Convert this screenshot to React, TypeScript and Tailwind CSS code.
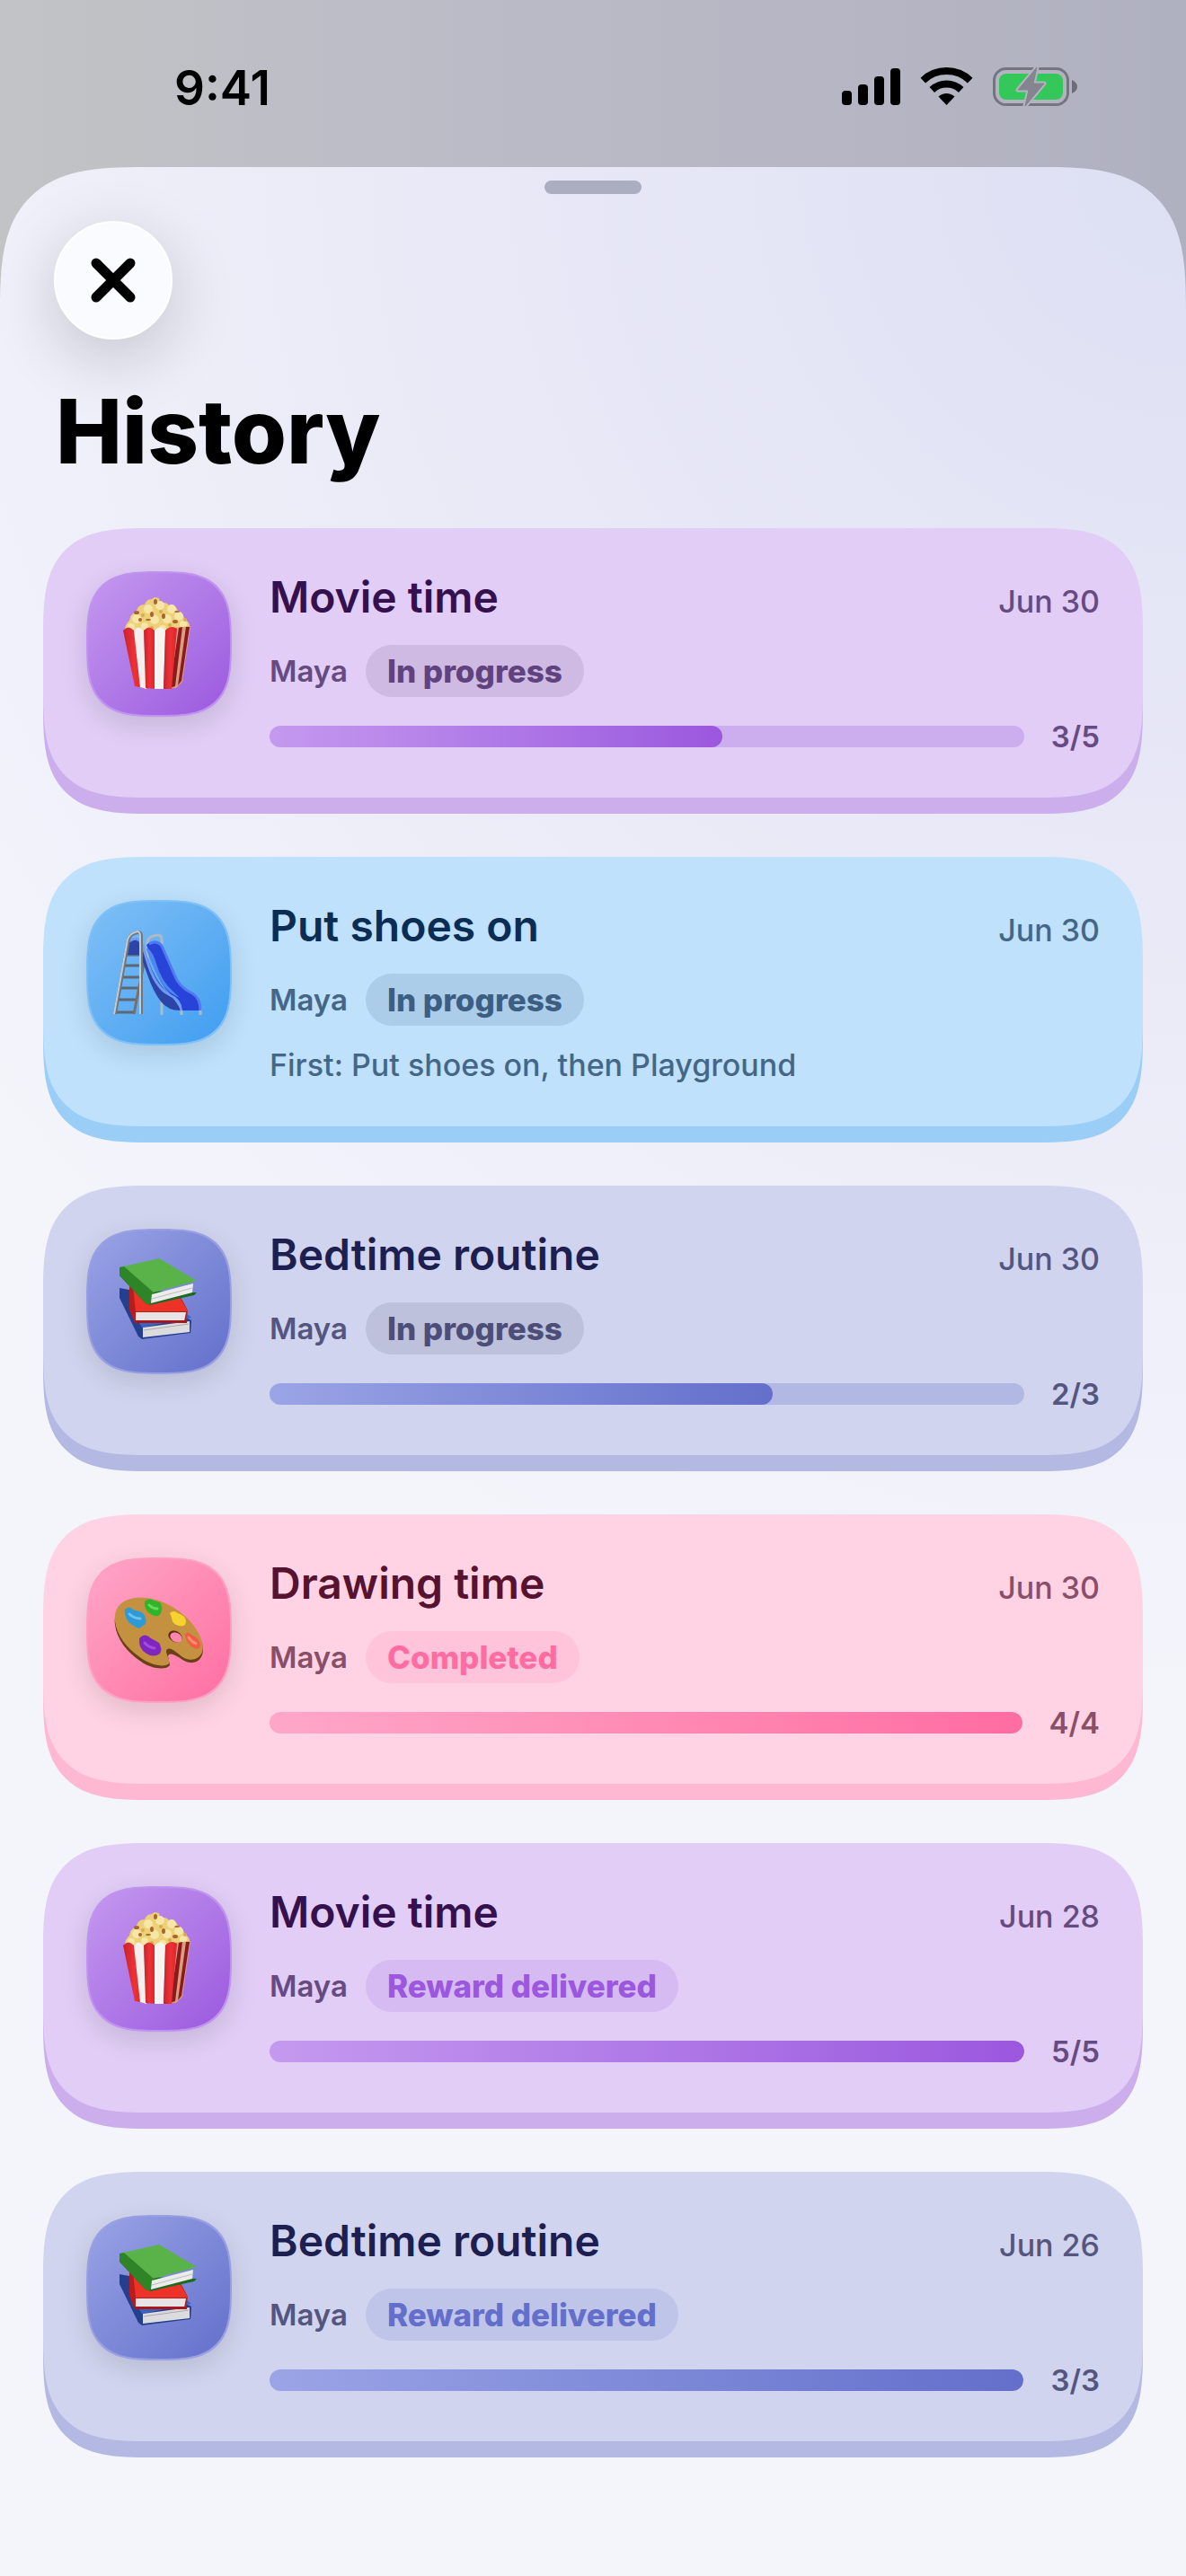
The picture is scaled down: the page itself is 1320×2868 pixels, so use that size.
import React from 'react';

type Theme = {
  face: string;
  edge: string;
  title: string;
  muted: string;
  track: string;
  fill: string;
  tile: string;
  doneBadge: string;
  openBadge: string;
};

const themes: Record<string, Theme> = {
  purple: {
    face: 'bg-[#e1cdf5] shadow-[0_18px_0_#cdaeed]',
    edge: 'border-[#c193f0]',
    title: 'text-[#34104f]',
    muted: 'text-[#664a82]',
    track: 'bg-[#ccadee]',
    fill: 'bg-linear-to-r from-[#c599ef] to-[#9b57de]',
    tile: 'bg-linear-to-br from-[#c599ef] to-[#9b57de]',
    doneBadge: 'bg-[#d5bbf1] text-[#9b57de]',
    openBadge: 'bg-[#cebae2] text-[#60437e]',
  },
  blue: {
    face: 'bg-[#bfe1fc] shadow-[0_18px_0_#9bcef7]',
    edge: 'border-[#7fc0f7]',
    title: 'text-[#0b2d54]',
    muted: 'text-[#456787]',
    track: 'bg-[#9bcef7]',
    fill: 'bg-linear-to-r from-[#80c0f6] to-[#3d9df0]',
    tile: 'bg-linear-to-br from-[#80c0f6] to-[#3d9df0]',
    doneBadge: 'bg-[#a5d3f9] text-[#3d9df0]',
    openBadge: 'bg-[#abcde9] text-[#3c5e82]',
  },
  indigo: {
    face: 'bg-[#d0d4ee] shadow-[0_18px_0_#b3b9e3]',
    edge: 'border-[#98a0e2]',
    title: 'text-[#1d1f50]',
    muted: 'text-[#54567f]',
    track: 'bg-[#b1b8e3]',
    fill: 'bg-linear-to-r from-[#9ba4e6] to-[#636fca]',
    tile: 'bg-linear-to-br from-[#9ba4e6] to-[#636fca]',
    doneBadge: 'bg-[#bfc5e9] text-[#636fca]',
    openBadge: 'bg-[#bdc1dc] text-[#4c4e78]',
  },
  pink: {
    face: 'bg-[#ffd3e3] shadow-[0_18px_0_#ffb8d1]',
    edge: 'border-[#ff9fc2]',
    title: 'text-[#56122e]',
    muted: 'text-[#894e68]',
    track: 'bg-[#ffb8d1]',
    fill: 'bg-linear-to-r from-[#ffa7c8] to-[#ff6ca1]',
    tile: 'bg-linear-to-br from-[#ffa7c8] to-[#ff6ca1]',
    doneBadge: 'bg-[#ffc4d9] text-[#ff6ca1]',
    openBadge: 'bg-[#eabfcf] text-[#7a405a]',
  },
};

function PopcornArt() {
  return (
    <svg viewBox="2 2 158 158" className="size-full" aria-hidden="true">
      <defs>
        <linearGradient id="pc-red" x1="0" x2="1">
          <stop offset="0" stopColor="#c3242c" />
          <stop offset="0.5" stopColor="#ee3136" />
          <stop offset="1" stopColor="#d9262d" />
        </linearGradient>
      </defs>
      <path d="M43 66 q0 -7 5 -11 q1 -8 8 -10 q1 -8 9 -8 q2 -6 8 -6 l3 -2 l5 1 l1 5 q7 -1 10 3 q8 -1 10 6 q7 4 7 9 q7 3 6 12 l-8 6 l-58 2z" fill="#ecd07a" />
      <g fill="#f7e6a6">
        <circle cx="56" cy="53" r="5" />
        <circle cx="69" cy="42" r="5" />
        <circle cx="82" cy="38" r="5" />
        <circle cx="95" cy="42" r="5" />
        <circle cx="76" cy="54" r="5" />
        <circle cx="90" cy="53" r="5" />
        <circle cx="103" cy="50" r="5" />
        <circle cx="65" cy="61" r="4" />
        <circle cx="85" cy="64" r="4" />
        <circle cx="108" cy="59" r="4" />
        <circle cx="50" cy="62" r="4" />
      </g>
      <g fill="#a9662b">
        <ellipse cx="77" cy="34" rx="2" ry="3" />
        <ellipse cx="56" cy="46" rx="3" ry="2" />
        <ellipse cx="73" cy="48" rx="2" ry="3" />
        <ellipse cx="60" cy="54" rx="2" ry="2" />
        <ellipse cx="69" cy="54" rx="3" ry="1" />
        <ellipse cx="86" cy="50" rx="2" ry="3" />
        <ellipse cx="101" cy="45" rx="3" ry="1" />
        <ellipse cx="99" cy="56" rx="3" ry="2" />
      </g>
      <g fill="#d8ac52">
        <circle cx="63" cy="49" r="2" />
        <circle cx="83" cy="45" r="2" />
        <circle cx="93" cy="60" r="2" />
        <circle cx="73" cy="63" r="2" />
        <circle cx="110" cy="54" r="2" />
      </g>
      <path d="M98 63 L116 61 L107 123 L100 130 L90 130z" fill="#d99e7d" />
      <path d="M103 63 l4 -1 l-8 66 l-6 2z M111 62 l4 0 l-9 60 l-4 5z" fill="#8c1a1c" />
      <path d="M41 66 Q47 59 53 66 L66 130 L54 128z" fill="url(#pc-red)" />
      <path d="M53 66 Q58 59 64 66 L67 131 L60 129z" fill="#f4efed" />
      <path d="M64 66 Q70 59 76 66 L77 131 L66 130z" fill="url(#pc-red)" />
      <path d="M76 66 Q82 59 88 66 L86 131 L76 131z" fill="#f7f3f1" />
      <path d="M88 66 Q94 59 101 64 L95 131 L86 131z" fill="url(#pc-red)" />
    </svg>
  );
}

function SlideArt() {
  return (
    <svg viewBox="2 3 158 158" className="size-full" aria-hidden="true" fill="none">
      <g stroke="#5d6873" strokeWidth="3">
        <path d="M44 62 H62 M41 74 H63 M39 87 H59 M37 99 H58 M34 112 H57 M32 126 H54" />
      </g>
      <path d="M64 72 L53 128" stroke="#7b6f68" strokeWidth="3" />
      <path d="M84 108 V129 M106 122 V129 M127 122 V129" stroke="#a9bccb" strokeWidth="3" />
      <path d="M68 66 V48 Q69 42 75 41 L80 40 Q84 40 84 45 V60" stroke="#aeb9c4" strokeWidth="3" />
      <path d="M47 47 Q55 41 61 47 L67 62 Q78 96 94 106 L106 124 Q92 125 83 114 Q74 102 68 84 Q62 66 58 62 L46 62z" fill="#2c44a8" />
      <path d="M48 47 Q56 41 61 48 Q64 55 67 66 Q76 98 92 106 Q104 111 106 124" stroke="#6f9bf5" strokeWidth="3" />
      <path d="M67 51 Q76 43 85 52 L98 84 Q103 98 118 105 Q127 110 127 124 L107 124 Q106 111 94 106 Q82 96 76 74z" fill="#2743d8" />
      <path d="M68 54 Q75 60 78 72 Q84 92 97 103 L104 110 Q92 105 84 94 Q74 76 67 56z" fill="#4e86ee" />
      <path d="M70 50 Q78 45 84 52 L98 84 Q103 98 118 105 Q127 110 127 124" stroke="#517af0" strokeWidth="3" />
      <path d="M32 128 L47 45 Q49 38 58 37 Q61 37 61 42 V128" stroke="#6e7680" strokeWidth="4" />
      <path d="M31 128 L46 45 Q48 38 57 36 Q60 36 60 42 V128" stroke="#c4ccd3" strokeWidth="2" />
    </svg>
  );
}

function BooksArt() {
  return (
    <svg viewBox="2 4 158 158" className="size-full" aria-hidden="true">
      <path d="M37 68 L48 70 L117 104 L116 118 L62 125 L58 122 L37 79z" fill="#253f8f" />
      <path d="M52 96 L110 95 L117 101 L62 112z" fill="#3c62c0" />
      <path d="M63 112 L115 105 V117 L63 123z" fill="#dcdcdf" />
      <path d="M64 115 L114 108" stroke="#a9a9b2" />
      <path d="M48 66 L105 78 L113 93 L111 106 L54 107 L48 92z" fill="#b71d1d" />
      <path d="M52 66 L104 78 L113 94 L55 94z" fill="#ed3228" />
      <path d="M55 95 H111 L109 105 H55z" fill="#e6e4e4" />
      <path d="M54 104 H112 V107 H54z" fill="#a31a1c" />
      <path d="M37 45 L70 71 L123 73 L120 76 L71 87 L66 85 L37 54z" fill="#1b6a1e" />
      <path d="M37 45 L81 35 L123 60 L71 74z" fill="#59b348" />
      <path d="M37 45 L42 44 L75 73 L71 87 L66 85 L37 54z" fill="#2f8428" />
      <path d="M73 75 L119 63 L118 73 L72 85z" fill="#ececec" />
      <path d="M73 80 L118 68" stroke="#bcbcbc" />
    </svg>
  );
}

function PaletteArt() {
  return (
    <svg viewBox="2 5 158 158" className="size-full" aria-hidden="true">
      <path d="M32 78 C30 58 45 49 66 51 C96 54 125 78 130 103 C131 117 121 124 109 118 C101 113 93 107 91 113 L93 123 C89 129 72 127 61 119 C45 108 34 94 32 78z" fill="#6a4016" />
      <path d="M32 74 C30 55 45 46 66 48 C96 51 126 76 130 102 C130 114 120 120 109 115 C101 110 92 100 89 107 C89 112 94 118 92 121 C88 126 72 123 61 115 C45 104 34 90 32 74z" fill="#c3913f" />
      <ellipse cx="99" cy="91" rx="8" ry="6" transform="rotate(28 99 91)" fill="#5e2c14" />
      <ellipse cx="100" cy="92" rx="7" ry="5" transform="rotate(28 100 92)" fill="#ff86b0" />
      <path d="M43 61 q5 -5 9 0 l10 3 q6 6 4 13 l-7 5 q-4 -1 -8 -4 q-9 -6 -8 -17z" fill="#2f9bd6" />
      <path d="M48 66 q5 5 12 5" stroke="#6cc3ee" strokeWidth="3" fill="none" strokeLinecap="round" />
      <path d="M65 52 q5 -5 10 -1 l7 2 q4 6 1 12 q-2 5 -10 2 q-9 -5 -8 -15z" fill="#2fb52b" />
      <path d="M70 56 q4 4 9 4" stroke="#6fd85a" strokeWidth="3" fill="none" strokeLinecap="round" />
      <path d="M93 65 q4 -4 9 0 q9 3 9 9 q0 7 -8 5 q-8 -2 -8 -9z" fill="#f6d22f" />
      <path d="M110 89 q3 -5 7 0 q9 4 10 11 q0 6 -7 4 q-8 -4 -10 -15z" fill="#ef5b45" />
      <path d="M114 92 q3 5 8 7" stroke="#ff8d72" strokeWidth="3" fill="none" strokeLinecap="round" />
      <path d="M59 93 q6 -7 13 0 l9 5 q4 7 1 12 q-7 5 -15 0 q-9 -5 -8 -17z" fill="#8125c0" />
      <path d="M65 98 q4 5 11 6" stroke="#a04edb" strokeWidth="3" fill="none" strokeLinecap="round" />
    </svg>
  );
}

const activities = [
  { title: 'Movie time', date: 'Jun 30', status: 'In progress', theme: 'purple', art: PopcornArt, done: 3, total: 5 },
  { title: 'Put shoes on', date: 'Jun 30', status: 'In progress', theme: 'blue', art: SlideArt, note: 'First: Put shoes on, then Playground' },
  { title: 'Bedtime routine', date: 'Jun 30', status: 'In progress', theme: 'indigo', art: BooksArt, done: 2, total: 3 },
  { title: 'Drawing time', date: 'Jun 30', status: 'Completed', theme: 'pink', art: PaletteArt, done: 4, total: 4 },
  { title: 'Movie time', date: 'Jun 28', status: 'Reward delivered', theme: 'purple', art: PopcornArt, done: 5, total: 5 },
  { title: 'Bedtime routine', date: 'Jun 26', status: 'Reward delivered', theme: 'indigo', art: BooksArt, done: 3, total: 3 },
];

function ActivityCard({ activity }: { activity: (typeof activities)[number] }) {
  const theme = themes[activity.theme];
  const Art = activity.art;
  const badge = activity.status === 'In progress' ? theme.openBadge : theme.doneBadge;

  return (
    <li
      className={`flex items-start gap-[42px] p-12 rounded-[84px] supports-[corner-shape:squircle]:rounded-[120px] [corner-shape:superellipse(1.6)] ${theme.face}`}
    >
      <div
        className={`size-[162px] shrink-0 border-2 rounded-[54px] supports-[corner-shape:squircle]:rounded-[80px] [corner-shape:superellipse(1.6)] bg-origin-border shadow-[0_9px_30px_rgba(0,0,0,0.12)] ${theme.edge} ${theme.tile}`}
      >
        <Art />
      </div>

      <div className="flex min-w-0 flex-1 flex-col gap-6">
        <div className="flex items-baseline justify-between">
          <h2 className={`text-[48px] leading-[58px] font-semibold ${theme.title}`}>{activity.title}</h2>
          <time className={`text-[34px] leading-10 font-medium ${theme.muted}`}>{activity.date}</time>
        </div>
        <div className={`flex items-center gap-5 leading-[58px] ${theme.muted}`}>
          <span className="text-[33px] font-semibold">Maya</span>
          <span className={`rounded-full px-6 text-[35px] font-extrabold ${badge}`}>{activity.status}</span>
        </div>
        {activity.note ? (
          <p className={`text-[34px] leading-10 font-medium ${theme.muted}`}>{activity.note}</p>
        ) : (
          <div className="flex items-center gap-[30px]">
            <div className={`h-6 flex-1 overflow-hidden rounded-full ${theme.track}`}>
              <div
                className={`h-full rounded-full ${theme.fill}`}
                style={{ width: `${(activity.done! / activity.total!) * 100}%` }}
              />
            </div>
            <span className={`text-[33px] leading-10 font-semibold ${theme.muted}`}>
              {activity.done}/{activity.total}
            </span>
          </div>
        )}
      </div>
    </li>
  );
}

function StatusBar() {
  return (
    <div className="flex h-[186px] items-start justify-between pt-[66px] pr-[120px] pl-[194px]">
      <span className="text-[53px] leading-[64px] font-semibold text-black">9:41</span>
      <svg viewBox="0 0 264 48" className="mt-[6px] h-12 w-[264px]" aria-hidden="true">
        <rect x="1" y="29" width="11" height="16" rx="4" />
        <rect x="19" y="22" width="11" height="23" rx="4" />
        <rect x="37" y="13" width="11" height="32" rx="4" />
        <rect x="55" y="4" width="11" height="41" rx="4" />
        <g fill="none" stroke="#000" strokeWidth="8">
          <path d="M91.3 17.6 A38 38 0 0 1 143.700 17.6" />
          <path d="M101.3 28 A23.5 23.5 0 0 1 133.700 28" />
        </g>
        <path d="M117.500 45 L108.500 35.500 A13 13 0 0 1 126.500 35.500z" />
        <rect x="170.500" y="4.500" width="82" height="40" rx="13" fill="none" stroke="#74757f" strokeWidth="3" />
        <rect x="176" y="10" width="71" height="29" rx="8" fill="#34c759" />
        <path d="M257 17 q6 3 6 7.500 t-6 7.500z" fill="#6c6d79" />
        <path
          d="M218 3 L197 28 H209 L205 46 L226 21 H214z"
          fill="#84858f"
          stroke="#b3b4c2"
          strokeWidth="5"
          strokeLinejoin="round"
          style={{ paintOrder: 'stroke' }}
        />
        <path d="M218 3 L197 28 H209 L205 46 L226 21 H214z" fill="#84858f" stroke="#84858f" strokeLinejoin="round" />
      </svg>
    </div>
  );
}

export default function App() {
  return (
    <div className="flex min-h-screen flex-col bg-linear-to-r from-[#c2c3c5] via-[#bbbbc7] via-40% to-[#b0b1c0] font-['Inter',sans-serif]">
      <StatusBar />

      <main className="flex-1 px-12 pt-[15px] pb-[132px] rounded-t-[114px] supports-[corner-shape:squircle]:rounded-t-[160px] [corner-shape:superellipse(1.56)] bg-[radial-gradient(circle_1700px_at_100%_0%,#dddff3,#ececf8_60%,#f3f5fb)]">
        <div className="mx-auto h-[15px] w-[108px] rounded-full bg-[#abadc0]" />

        <header className="mt-[30px] pl-3">
          <button
            type="button"
            aria-label="Close"
            className="flex size-[132px] items-center justify-center rounded-full border-2 border-white bg-[#fafbff] shadow-[0_20px_72px_rgba(0,0,0,0.18)]"
          >
            <svg viewBox="0 0 50 50" className="size-[50px]" aria-hidden="true">
              <path d="M6 6 L44 44 M44 6 L6 44" stroke="#000" strokeWidth="11" strokeLinecap="round" />
            </svg>
          </button>
          <h1 className="mt-[42px] pl-0.5 text-[99px] leading-[120px] font-extrabold text-black">History</h1>
        </header>

        <ul className="mt-12 flex flex-col gap-[66px]">
          {activities.map(activity => (
            <ActivityCard key={activity.title + activity.date} activity={activity} />
          ))}
        </ul>
      </main>
    </div>
  );
}
